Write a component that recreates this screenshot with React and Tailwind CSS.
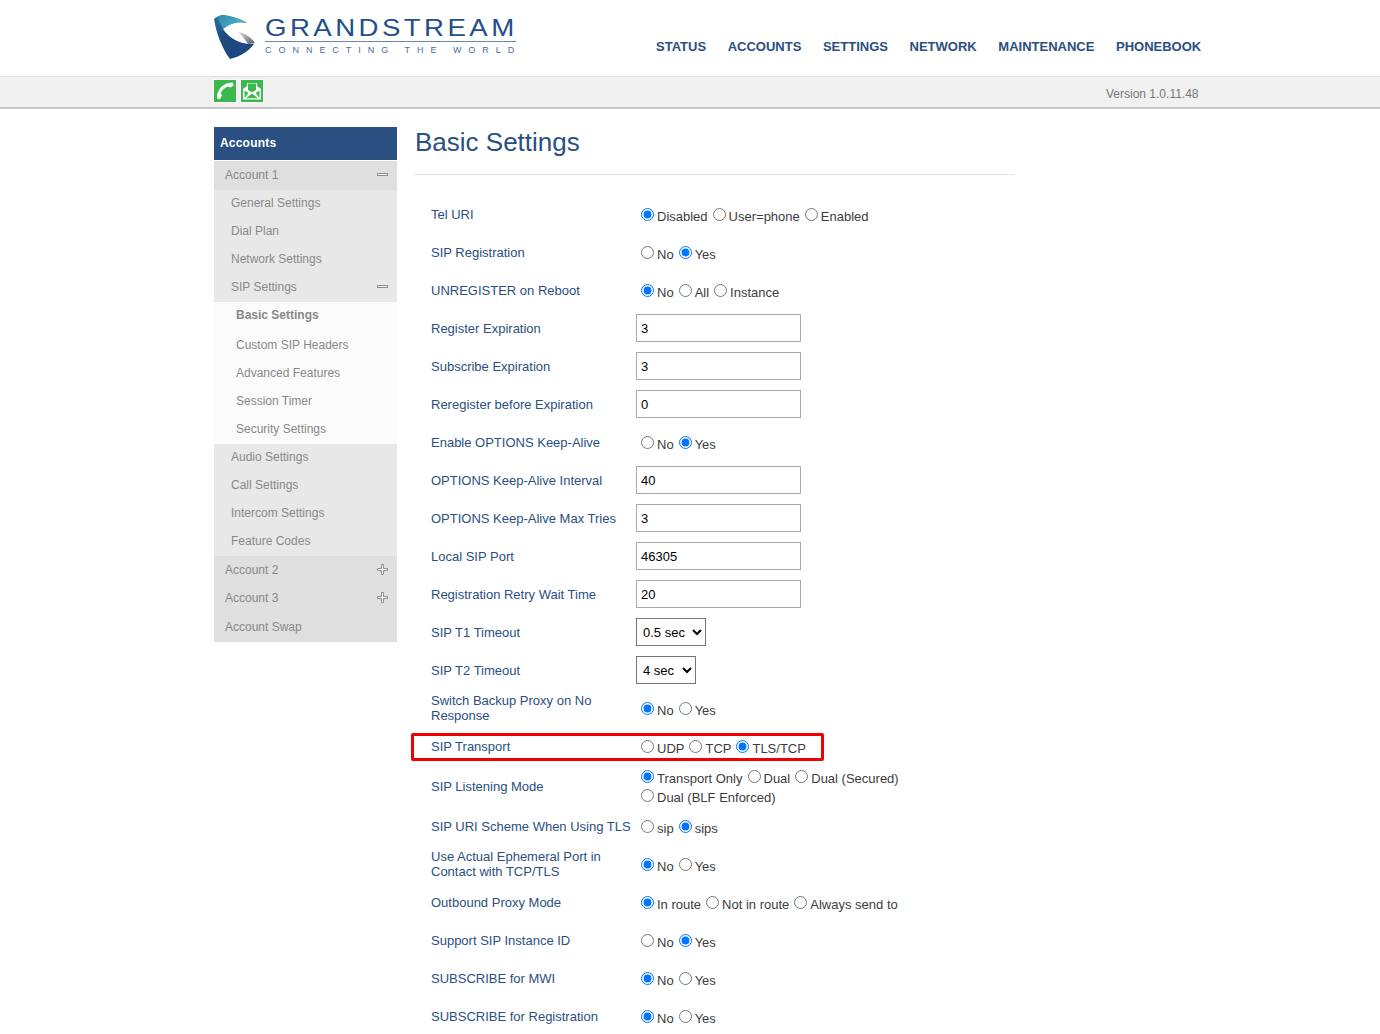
import React from "react";

const labelFont = "font-['Liberation_Sans',Arial,sans-serif]";

const nav = ["STATUS", "ACCOUNTS", "SETTINGS", "NETWORK", "MAINTENANCE", "PHONEBOOK"];

const rows = [
  { label: "Tel URI", radios: ["Disabled", "User=phone", "Enabled"], on: 0 },
  { label: "SIP Registration", radios: ["No", "Yes"], on: 1 },
  { label: "UNREGISTER on Reboot", radios: ["No", "All", "Instance"], on: 0 },
  { label: "Register Expiration", input: "3" },
  { label: "Subscribe Expiration", input: "3" },
  { label: "Reregister before Expiration", input: "0" },
  { label: "Enable OPTIONS Keep-Alive", radios: ["No", "Yes"], on: 1 },
  { label: "OPTIONS Keep-Alive Interval", input: "40" },
  { label: "OPTIONS Keep-Alive Max Tries", input: "3" },
  { label: "Local SIP Port", input: "46305" },
  { label: "Registration Retry Wait Time", input: "20" },
  { label: "SIP T1 Timeout", select: "0.5 sec", width: "w-[70px]" },
  { label: "SIP T2 Timeout", select: "4 sec", width: "w-[60px]" },
  { label: "Switch Backup Proxy on No Response", radios: ["No", "Yes"], on: 0 },
  { label: "SIP Transport", radios: ["UDP", "TCP", "TLS/TCP"], on: 2, marked: true },
  {
    label: "SIP Listening Mode",
    radios: ["Transport Only", "Dual", "Dual (Secured)", "Dual (BLF Enforced)"],
    on: 0,
    tall: true,
  },
  { label: "SIP URI Scheme When Using TLS", radios: ["sip", "sips"], on: 1 },
  { label: "Use Actual Ephemeral Port in Contact with TCP/TLS", radios: ["No", "Yes"], on: 0 },
  { label: "Outbound Proxy Mode", radios: ["In route", "Not in route", "Always send to"], on: 0 },
  { label: "Support SIP Instance ID", radios: ["No", "Yes"], on: 1 },
  { label: "SUBSCRIBE for MWI", radios: ["No", "Yes"], on: 0 },
  { label: "SUBSCRIBE for Registration", radios: ["No", "Yes"], on: 0 },
];

const Minus = () => (
  <svg width="12" height="12" viewBox="0 0 12 12" className="shrink-0">
    <rect x="0.5" y="4.5" width="10" height="2" fill="#f4f4f4" stroke="#8f8f8f" />
  </svg>
);

const Plus = () => (
  <svg width="12" height="12" viewBox="0 0 12 12" className="shrink-0">
    <path d="M4.5 .5h2v4h4v2h-4v4h-2v-4h-4v-2h4z" fill="#f4f4f4" stroke="#8f8f8f" />
  </svg>
);

const Logo = () => (
  <svg width="44" height="46" viewBox="0 0 44 46" className="shrink-0">
    <defs>
      <linearGradient id="logoBody" x1="0.2" y1="0" x2="0.6" y2="1">
        <stop offset="0" stopColor="#2a6f98" />
        <stop offset="0.45" stopColor="#1f4a80" />
        <stop offset="1" stopColor="#1c4683" />
      </linearGradient>
      <linearGradient id="logoTop" x1="0" y1="0" x2="1" y2="0.4">
        <stop offset="0" stopColor="#2f87a8" />
        <stop offset="1" stopColor="#4fb6d2" />
      </linearGradient>
      <linearGradient id="logoGrey" x1="0" y1="0" x2="1" y2="1">
        <stop offset="0" stopColor="#e2e4e6" />
        <stop offset="1" stopColor="#55585c" />
      </linearGradient>
    </defs>
    <path
      d="M0 4 C1 3 4 1 8 0 C18 1 27 4 33 8 C24 6 15 9 9 14 C14 22 25 30 40 29 C34 37 25 42 16 44 C9 35 2 18 0 4 Z"
      fill="url(#logoBody)"
    />
    <path d="M3 2 L8 0 C18 1 27 4 33 8 C24 6 15 9 9 14 C7 10 5 6 3 2 Z" fill="url(#logoTop)" />
    <path d="M24 17 C31 18 37 22 41 28 C40 28 37 29 34 29 C31 25 28 20 24 17 Z" fill="url(#logoGrey)" />
  </svg>
);

const PhoneTile = () => (
  <div className="-ml-px flex h-[24px] w-[24px] items-center justify-center border border-white bg-[#3cb94c]">
    <svg width="20" height="20" viewBox="0 0 20 20">
      <path
        d="M18 2 C11 1 4 6 2 14 C1.500 17 3 19 5 18 L7 14.500 C7 13.500 6 13 5.500 12.500 C7 9 10 6.500 13 5.500 L15.500 6.500 L18.500 4.500 Z"
        fill="#fff"
      />
    </svg>
  </div>
);

const MailTile = () => (
  <div className="flex h-[24px] w-[24px] items-center justify-center border border-white bg-[#3cb94c]">
    <svg width="20" height="20" viewBox="0 0 20 20">
      <path d="M1 8 L5 5 V2 H15 V5 L19 8 V18.500 H1 Z" fill="#fff" />
      <path d="M6 2.500 H14 V9 L10 11.500 L6 9 Z" fill="#3cb94c" />
      <path d="M2.500 9.500 L6.500 12 L2.500 17 Z M17.500 9.500 L13.500 12 L17.500 17 Z" fill="#3cb94c" />
      <path d="M4 17.200 L10 12.500 L16 17.200 Z" fill="#3cb94c" />
    </svg>
  </div>
);

const SideRow = ({ children, icon, className }) => (
  <div className={`flex items-center justify-between pr-[8px] ${className}`}>
    <span>{children}</span>
    {icon}
  </div>
);

const Radios = ({ row, index }) => (
  <div className={`w-[290px] text-[13px] leading-[19px] text-[#3c3c3c] ${row.tall ? "pt-[3px]" : "pt-[4px]"}`}>
    {row.radios.map((name, i) => (
      <label key={name} className={row.tall && i === 3 ? "block" : "inline"}>
        <input
          type="radio"
          name={`radio-${index}`}
          defaultChecked={row.on === i}
          className="mr-[3px] ml-[5px] align-[0px]"
        />
        {name}
      </label>
    ))}
  </div>
);

const FormRow = ({ row, index }) => (
  <div className={`relative flex items-center ${row.tall ? "min-h-[42px]" : "min-h-[38px]"}`}>
    {row.marked && (
      <div className="pointer-events-none absolute top-[6px] left-[-20px] h-[28px] w-[413px] rounded-[2px] border-[3px] border-[#f00000]" />
    )}
    <div className="w-[205px] pr-[4px] text-[13px] leading-[15px] text-[#2a5082]">{row.label}</div>
    {row.radios && <Radios row={row} index={index} />}
    {row.input && (
      <input
        type="text"
        defaultValue={row.input}
        className="h-[28px] w-[165px] border border-[#a9a9a9] px-[4px] text-[13px] text-black"
      />
    )}
    {row.select && (
      <select className={`h-[28px] ${row.width} border border-[#767676] px-[2px] text-[13px] text-black`}>
        <option>{row.select}</option>
      </select>
    )}
  </div>
);

export default function App() {
  return (
    <div className={`h-screen overflow-hidden bg-white ${labelFont}`}>
      <header className="flex h-[77px] border-b border-[#e0e0e0] pl-[214px]">
        <div className="flex w-[304px] items-start gap-[7px] pt-[15px]">
          <Logo />
          <div className="flex w-[251px] flex-col pt-[1px]">
            <span className="origin-left scale-x-[1.15] text-[24px] leading-[24px] tracking-[3px] whitespace-nowrap text-[#234f88]">
              GRANDSTREAM
            </span>
            <span className="mt-[1px] h-px w-full bg-[#6a88ad]" />
            <span className="mt-[3px] text-[9px] leading-[10px] tracking-[6.97px] whitespace-nowrap text-[#4a6d98]">
              CONNECTING THE WORLD
            </span>
          </div>
        </div>
        <nav className="ml-[138px] flex gap-[21.6px] pt-[39px] text-[13px] leading-[16px] font-bold text-[#2a4f80]">
          {nav.map((item) => (
            <span key={item}>{item}</span>
          ))}
        </nav>
      </header>

      <div className="flex h-[32px] items-center border-b-2 border-[#c8c8c8] bg-[#f1f1f1] pl-[214px]">
        <div className="flex gap-[3px] pb-[3px]">
          <PhoneTile />
          <MailTile />
        </div>
        <span className="ml-[842px] pt-[4px] text-[12px] text-[#777]">Version 1.0.11.48</span>
      </div>

      <div className="flex pt-[18px] pl-[214px]">
        <aside className="w-[183px] shrink-0 text-[12px] text-[#888]">
          <div className="mb-px flex h-[33px] items-center bg-[#2a5082] pb-px pl-[6px] text-[12px] font-bold tracking-[0.2px] text-white">
            Accounts
          </div>
          <SideRow icon={<Minus />} className="h-[29px] bg-[#dfdfdf] pb-[2px] pl-[11px]">
            Account 1
          </SideRow>
          <div className="bg-[#e8e8e8] pl-[17px]">
            <SideRow className="h-[28px] pb-[2px]">General Settings</SideRow>
            <SideRow className="h-[28px] pb-[2px]">Dial Plan</SideRow>
            <SideRow className="h-[28px] pb-[2px]">Network Settings</SideRow>
            <SideRow icon={<Minus />} className="h-[28px] pb-[2px]">
              SIP Settings
            </SideRow>
          </div>
          <div className="bg-[#fbfbfb] pl-[22px]">
            <SideRow className="h-[29px] pb-[4px] font-bold">Basic Settings</SideRow>
            <SideRow className="h-[29px] pb-[2px]">Custom SIP Headers</SideRow>
            <SideRow className="h-[28px] pb-[2px]">Advanced Features</SideRow>
            <SideRow className="h-[28px] pb-[2px]">Session Timer</SideRow>
            <SideRow className="h-[28px] pb-[2px]">Security Settings</SideRow>
          </div>
          <div className="bg-[#e8e8e8] pl-[17px]">
            <SideRow className="h-[28px] pb-[2px]">Audio Settings</SideRow>
            <SideRow className="h-[28px] pb-[2px]">Call Settings</SideRow>
            <SideRow className="h-[28px] pb-[2px]">Intercom Settings</SideRow>
            <SideRow className="h-[28px] pb-[2px]">Feature Codes</SideRow>
          </div>
          <div className="bg-[#dfdfdf] pl-[11px]">
            <SideRow icon={<Plus />} className="h-[28px]">
              Account 2
            </SideRow>
            <SideRow icon={<Plus />} className="h-[28px]">
              Account 3
            </SideRow>
            <SideRow className="h-[30px]">Account Swap</SideRow>
          </div>
        </aside>

        <main className="ml-[18px] w-[600px]">
          <h1 className="h-[48px] border-b border-[#e3e3e3] text-[26px] leading-[31px] text-[#2a5082]">
            Basic Settings
          </h1>
          <div className="pt-[20px] pl-[16px]">
            {rows.map((row, i) => (
              <FormRow key={row.label} row={row} index={i} />
            ))}
          </div>
        </main>
      </div>
    </div>
  );
}
